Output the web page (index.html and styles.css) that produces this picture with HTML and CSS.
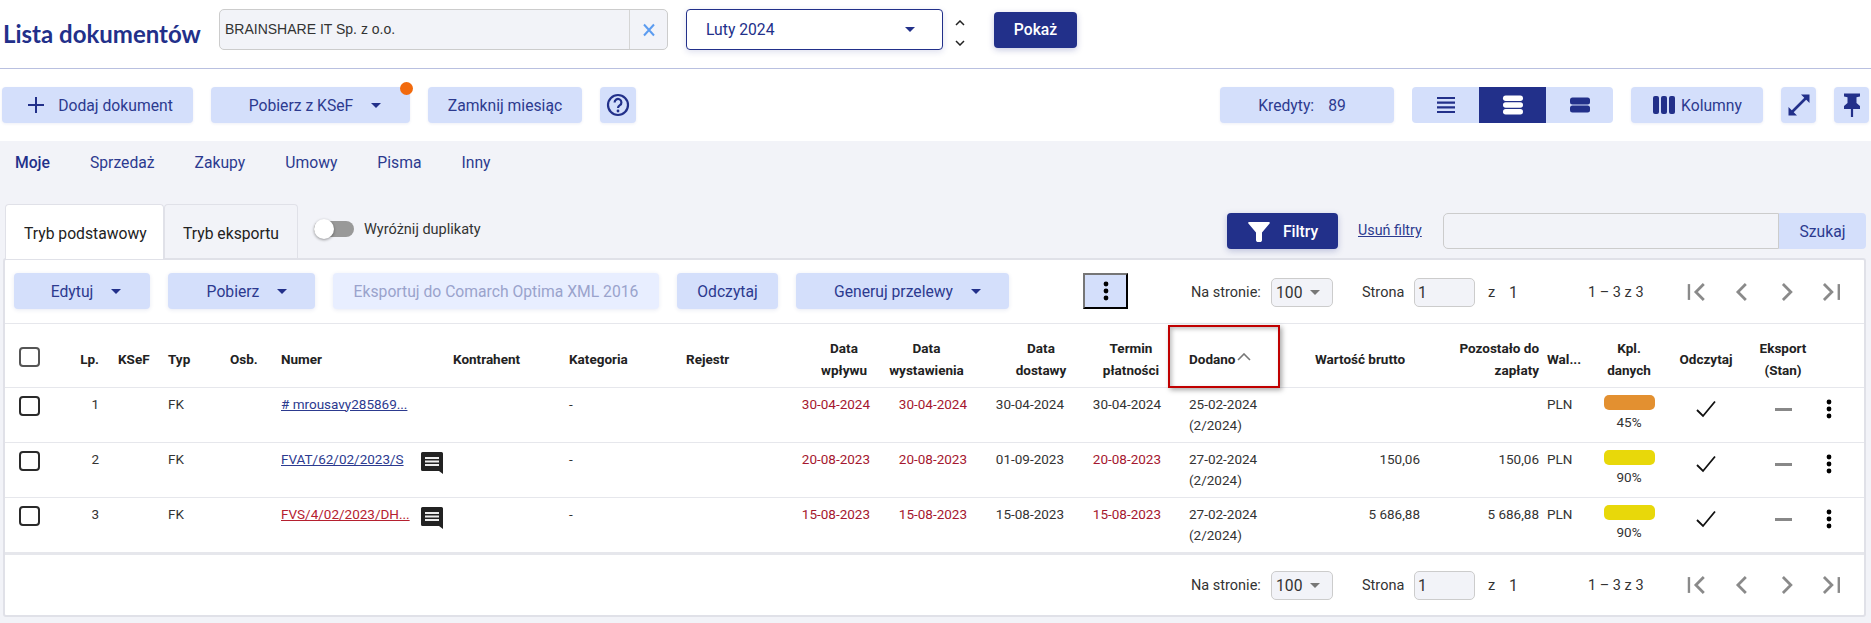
FILE: index.html
```html
<!DOCTYPE html>
<html lang="pl">
<head>
<meta charset="utf-8">
<title>Lista dokumentów</title>
<link rel="stylesheet" href="styles.css">
</head>
<body>
<header class="top">
  <h1 class="title">Lista dokumentów</h1>
  <div class="company">
    <span class="company-name">BRAINSHARE IT Sp. z o.o.</span>
    <span class="company-clear"><svg width="16" height="16" viewBox="0 0 16 16"><path d="M3 2.5l10 11M13 2.5l-10 11" stroke="#5c9cf0" stroke-width="2" fill="none"/></svg></span>
  </div>
  <div class="month"><span>Luty 2024</span><i class="caret"></i></div>
  <div class="stepper">
    <svg width="10" height="6" viewBox="0 0 10 6"><path d="M1 5l4-4 4 4" stroke="#222" stroke-width="1.5" fill="none"/></svg>
    <svg width="10" height="6" viewBox="0 0 10 6"><path d="M1 1l4 4 4-4" stroke="#222" stroke-width="1.5" fill="none"/></svg>
  </div>
  <button class="btn primary show">Pokaż</button>
</header>

<section class="toolbar">
  <button class="btn add"><svg width="18" height="18" viewBox="0 0 18 18"><path d="M9 1v16M1 9h16" stroke="#22308a" stroke-width="2" fill="none"/></svg>Dodaj dokument</button>
  <button class="btn ksef">Pobierz z KSeF<i class="caret"></i><b class="dot"></b></button>
  <button class="btn close-month">Zamknij miesiąc</button>
  <button class="btn help"><svg width="24" height="24" viewBox="0 0 24 24"><circle cx="12" cy="12" r="10" stroke="#22308a" stroke-width="2.2" fill="none"/><path d="M8.6 9.4a3.4 3.4 0 1 1 5.3 2.8c-1.2.8-1.9 1.4-1.9 2.9" stroke="#22308a" stroke-width="2.2" fill="none"/><circle cx="12" cy="18" r="1.4" fill="#22308a"/></svg></button>
  <span class="spacer"></span>
  <button class="btn credits"><span>Kredyty:</span><span>89</span></button>
  <div class="segment">
    <span class="seg"><svg width="20" height="20" viewBox="0 0 20 20"><path d="M1 3h18M1 7.700h18M1 12.300h18M1 17h18" stroke="#22308a" stroke-width="2.200" fill="none"/></svg></span>
    <span class="seg on"><svg width="22" height="20" viewBox="0 0 22 20"><rect x="1" y="0.500" width="20" height="5.500" rx="2.700" fill="#fff"/><rect x="1" y="7.200" width="20" height="5.500" rx="2.700" fill="#fff"/><rect x="1" y="14" width="20" height="5.500" rx="2.700" fill="#fff"/></svg></span>
    <span class="seg"><svg width="22" height="20" viewBox="0 0 22 20"><rect x="1" y="2.500" width="20" height="7" rx="2.500" fill="#22308a"/><rect x="1" y="10.500" width="20" height="7" rx="2.500" fill="#22308a"/></svg></span>
  </div>
  <button class="btn cols"><svg width="24" height="20" viewBox="0 0 24 20"><rect x="1" y="1" width="6" height="18" rx="2" fill="#22308a"/><rect x="9" y="1" width="6" height="18" rx="2" fill="#22308a"/><rect x="17" y="1" width="6" height="18" rx="2" fill="#22308a"/></svg>Kolumny</button>
  <button class="btn icon"><svg width="24" height="24" viewBox="0 0 24 24"><path d="M5 19L19 5" stroke="#22308a" stroke-width="2.600" fill="none"/><path d="M14 1.500h8.500V10zM1.500 14v8.500H10z" fill="#22308a"/></svg></button>
  <button class="btn icon"><svg width="22" height="26" viewBox="0 0 22 26"><path d="M3 1.500h16v3l-3.500.8V11l3.500 3v3H3v-3l3.500-3V5.300L3 4.500z" fill="#22308a"/><path d="M11 16v9" stroke="#22308a" stroke-width="2.200" fill="none"/></svg></button>
</section>

<main class="main">
  <nav class="subnav">
    <a class="active">Moje</a><a>Sprzedaż</a><a>Zakupy</a><a>Umowy</a><a>Pisma</a><a>Inny</a>
  </nav>

  <div class="tabbar">
    <div class="tab current">Tryb podstawowy</div>
    <div class="tab">Tryb eksportu</div>
    <div class="toggle"><span class="track"><span class="thumb"></span></span>Wyróżnij duplikaty</div>
    <span class="spacer"></span>
    <button class="btn primary filters"><svg width="24" height="24" viewBox="0 0 24 24"><path d="M2 3h20c.8 0 1.100.8.600 1.400L15 13.500V21c0 1.500-1 2-2 2h-2c-1 0-2-.5-2-2v-7.500L1.400 4.400C.9 3.800 1.200 3 2 3z" fill="#fff"/></svg>Filtry</button>
    <a class="clear-filters">Usuń filtry</a>
    <div class="search"><span class="search-box"></span><button class="search-btn">Szukaj</button></div>
  </div>

  <section class="card">
    <div class="actions">
      <button class="btn a-edit">Edytuj<i class="caret"></i></button>
      <button class="btn a-get">Pobierz<i class="caret"></i></button>
      <button class="btn a-export">Eksportuj do Comarch Optima XML 2016</button>
      <button class="btn a-read">Odczytaj</button>
      <button class="btn a-pay">Generuj przelewy<i class="caret"></i></button>
      <button class="a-more"><svg width="6" height="20" viewBox="0 0 6 20"><circle cx="3" cy="3" r="2.400"/><circle cx="3" cy="10" r="2.400"/><circle cx="3" cy="17" r="2.400"/></svg></button>
      <div class="pager">
        <span class="p-label">Na stronie:</span>
        <span class="p-select">100<i class="caret gray"></i></span>
        <span class="p-page">Strona</span>
        <span class="p-input">1</span>
        <span class="p-z">z</span><span class="p-total">1</span>
        <span class="p-range">1 – 3 z 3</span>
        <span class="p-icons">
          <svg width="26" height="26" viewBox="0 0 26 26"><path d="M5 5v16" stroke="#8a8a8a" stroke-width="2.400" fill="none"/><path d="M20 5l-8 8 8 8" stroke="#8a8a8a" stroke-width="2.800" fill="none"/></svg>
          <svg width="26" height="26" viewBox="0 0 26 26"><path d="M17 5l-8 8 8 8" stroke="#8a8a8a" stroke-width="2.800" fill="none"/></svg>
          <svg width="26" height="26" viewBox="0 0 26 26"><path d="M9 5l8 8-8 8" stroke="#8a8a8a" stroke-width="2.800" fill="none"/></svg>
          <svg width="26" height="26" viewBox="0 0 26 26"><path d="M6 5l8 8-8 8" stroke="#8a8a8a" stroke-width="2.800" fill="none"/><path d="M21 5v16" stroke="#8a8a8a" stroke-width="2.400" fill="none"/></svg>
        </span>
      </div>
    </div>

    <table class="docs">
      <colgroup>
        <col class="c-check"><col class="c-lp"><col class="c-ksef"><col class="c-typ"><col class="c-osb"><col class="c-num"><col class="c-kon"><col class="c-kat"><col class="c-rej"><col class="c-wpl"><col class="c-wys"><col class="c-dos"><col class="c-ter"><col class="c-dod"><col class="c-war"><col class="c-poz"><col class="c-wal"><col class="c-kpl"><col class="c-odc"><col class="c-eks"><col class="c-men">
      </colgroup>
      <thead>
        <tr>
          <th class="check"><span class="box head"></span></th>
          <th class="lp">Lp.</th><th>KSeF</th><th>Typ</th><th>Osb.</th><th>Numer</th><th>Kontrahent</th><th>Kategoria</th><th>Rejestr</th>
          <th class="h-wpl">Data wpływu</th><th class="h-wys">Data wystawienia</th><th class="h-dos">Data dostawy</th><th class="h-ter">Termin płatności</th>
          <th class="dod">Dodano<svg class="sort" width="14" height="8" viewBox="0 0 14 8"><path d="M1 7l6-6 6 6" stroke="#777" stroke-width="1.600" fill="none"/></svg><span class="mark"></span></th>
          <th class="h-war">Wartość brutto</th><th class="num">Pozostało do zapłaty</th><th class="wal">Wal...</th><th class="ctr">Kpl. danych</th><th class="ctr">Odczytaj</th><th class="ctr">Eksport (Stan)</th><th></th>
        </tr>
      </thead>
      <tbody>
        <tr>
          <td class="check"><span class="box"></span></td><td class="lp">1</td><td></td><td>FK</td><td></td>
          <td><a class="doc">#&nbsp;mrousavy285869...</a></td><td></td><td>-</td><td></td>
          <td class="d-wpl late">30-04-2024</td><td class="d-wys late">30-04-2024</td><td class="d-dos">30-04-2024</td><td class="d-ter">30-04-2024</td>
          <td class="dod">25-02-2024<br>(2/2024)</td><td class="d-war"></td><td class="num"></td><td class="wal">PLN</td>
          <td class="ctr"><span class="bar orange"></span><span class="pct">45%</span></td>
          <td class="ctr"><svg class="check-i" width="20" height="18" viewBox="0 0 20 18"><path d="M1 10l6 6L19 1.500" stroke="#111" stroke-width="1.800" fill="none"/></svg></td>
          <td class="ctr"><span class="dash"></span></td>
          <td class="more"><svg width="6" height="20" viewBox="0 0 6 20"><circle cx="3" cy="3" r="2.400"/><circle cx="3" cy="10" r="2.400"/><circle cx="3" cy="17" r="2.400"/></svg></td>
        </tr>
        <tr>
          <td class="check"><span class="box"></span></td><td class="lp">2</td><td></td><td>FK</td><td></td>
          <td class="with-note"><a class="doc">FVAT/62/02/2023/S</a><svg class="note" width="22" height="22" viewBox="0 0 22 22"><path d="M1.500 0h19A1.500 1.500 0 0 1 22 1.500V22l-4-3H1.500A1.500 1.500 0 0 1 0 17.500v-16A1.500 1.500 0 0 1 1.500 0z" fill="#222"/><path d="M4 6h14M4 9.500h14M4 13h14" stroke="#eee" stroke-width="2.200"/></svg></td><td></td><td>-</td><td></td>
          <td class="d-wpl late">20-08-2023</td><td class="d-wys late">20-08-2023</td><td class="d-dos">01-09-2023</td><td class="d-ter late">20-08-2023</td>
          <td class="dod">27-02-2024<br>(2/2024)</td><td class="d-war">150,06</td><td class="num">150,06</td><td class="wal">PLN</td>
          <td class="ctr"><span class="bar yellow"></span><span class="pct">90%</span></td>
          <td class="ctr"><svg class="check-i" width="20" height="18" viewBox="0 0 20 18"><path d="M1 10l6 6L19 1.500" stroke="#111" stroke-width="1.800" fill="none"/></svg></td>
          <td class="ctr"><span class="dash"></span></td>
          <td class="more"><svg width="6" height="20" viewBox="0 0 6 20"><circle cx="3" cy="3" r="2.400"/><circle cx="3" cy="10" r="2.400"/><circle cx="3" cy="17" r="2.400"/></svg></td>
        </tr>
        <tr>
          <td class="check"><span class="box"></span></td><td class="lp">3</td><td></td><td>FK</td><td></td>
          <td class="with-note"><a class="doc late">FVS/4/02/2023/DH...</a><svg class="note" width="22" height="22" viewBox="0 0 22 22"><path d="M1.500 0h19A1.500 1.500 0 0 1 22 1.500V22l-4-3H1.500A1.500 1.500 0 0 1 0 17.500v-16A1.500 1.500 0 0 1 1.500 0z" fill="#222"/><path d="M4 6h14M4 9.500h14M4 13h14" stroke="#eee" stroke-width="2.200"/></svg></td><td></td><td>-</td><td></td>
          <td class="d-wpl late">15-08-2023</td><td class="d-wys late">15-08-2023</td><td class="d-dos">15-08-2023</td><td class="d-ter late">15-08-2023</td>
          <td class="dod">27-02-2024<br>(2/2024)</td><td class="d-war">5 686,88</td><td class="num">5 686,88</td><td class="wal">PLN</td>
          <td class="ctr"><span class="bar yellow"></span><span class="pct">90%</span></td>
          <td class="ctr"><svg class="check-i" width="20" height="18" viewBox="0 0 20 18"><path d="M1 10l6 6L19 1.500" stroke="#111" stroke-width="1.800" fill="none"/></svg></td>
          <td class="ctr"><span class="dash"></span></td>
          <td class="more"><svg width="6" height="20" viewBox="0 0 6 20"><circle cx="3" cy="3" r="2.400"/><circle cx="3" cy="10" r="2.400"/><circle cx="3" cy="17" r="2.400"/></svg></td>
        </tr>
      </tbody>
    </table>

    <div class="foot">
      <div class="pager">
        <span class="p-label">Na stronie:</span>
        <span class="p-select">100<i class="caret gray"></i></span>
        <span class="p-page">Strona</span>
        <span class="p-input">1</span>
        <span class="p-z">z</span><span class="p-total">1</span>
        <span class="p-range">1 – 3 z 3</span>
        <span class="p-icons">
          <svg width="26" height="26" viewBox="0 0 26 26"><path d="M5 5v16" stroke="#8a8a8a" stroke-width="2.400" fill="none"/><path d="M20 5l-8 8 8 8" stroke="#8a8a8a" stroke-width="2.800" fill="none"/></svg>
          <svg width="26" height="26" viewBox="0 0 26 26"><path d="M17 5l-8 8 8 8" stroke="#8a8a8a" stroke-width="2.800" fill="none"/></svg>
          <svg width="26" height="26" viewBox="0 0 26 26"><path d="M9 5l8 8-8 8" stroke="#8a8a8a" stroke-width="2.800" fill="none"/></svg>
          <svg width="26" height="26" viewBox="0 0 26 26"><path d="M6 5l8 8-8 8" stroke="#8a8a8a" stroke-width="2.800" fill="none"/><path d="M21 5v16" stroke="#8a8a8a" stroke-width="2.400" fill="none"/></svg>
        </span>
      </div>
    </div>
  </section>
</main>
</body>
</html>
```
FILE: styles.css
```css
* { box-sizing: border-box; }
html, body { margin: 0; padding: 0; }
body { width: 1871px; height: 623px; overflow: hidden; background: #f2f3f8; font-family: Roboto, "Liberation Sans", sans-serif; font-size: 15.700px; color: #222; }
button { font-family: inherit; border: 0; padding: 0; margin: 0; }
a { color: inherit; }

.btn { display: flex; align-items: center; justify-content: center; height: 36px; border-radius: 4px; background: #d4dffb; color: #2c3a8f; font-size: 15.700px; box-shadow: 0 1px 3px rgba(34,48,138,.08); position: relative; flex: none; }
.btn.primary { background: #22308a; color: #fff; font-weight: 500; box-shadow: 0 2px 6px rgba(34,48,138,.25); }
.caret { display: inline-block; width: 0; height: 0; border-left: 5px solid transparent; border-right: 5px solid transparent; border-top: 5px solid #22308a; flex: none; }
.caret.gray { border-top-color: #777; }
.spacer { flex: 1; }

.top { display: flex; align-items: center; height: 69px; padding: 0 0 9px 3px; background: #fff; border-bottom: 1px solid #b9c0e0; }
.title { margin: 7px 0 0; width: 216px; font-family: Lato, sans-serif; font-size: 24px; font-weight: 700; color: #22308a; white-space: nowrap; }
.company { display: flex; width: 449px; height: 41px; background: #f2f3f8; border: 1px solid #ccc; border-radius: 5px; font-family: "Liberation Sans", sans-serif; font-size: 14px; color: #333; }
.company-name { flex: 1; padding-left: 5px; line-height: 38px; }
.company-clear { display: flex; align-items: center; justify-content: center; width: 38px; border-left: 1px solid #d5d5d5; }
.month { display: flex; align-items: center; justify-content: space-between; width: 257px; height: 41px; margin-left: 18px; padding: 0 27px 0 19px; border: 1px solid #22308a; border-radius: 4px; background: #fff; color: #22308a; box-shadow: 0 2px 6px rgba(34,48,138,.15); }
.stepper { display: flex; flex-direction: column; gap: 14px; width: 10px; margin: 7px 0 0 12px; }
.stepper svg { display: block; }
.show { width: 83px; margin-left: 29px; }

.toolbar { display: flex; align-items: flex-start; gap: 18px; height: 72px; padding: 18px 2px 0 2px; background: #fff; }
.add { width: 191px; gap: 13px; padding-left: 5px; }
.ksef { width: 199px; gap: 18px; padding-left: 9px; }
.dot { position: absolute; right: -3px; top: -5px; width: 13px; height: 13px; border-radius: 50%; background: #f26a0d; }
.close-month { width: 154px; }
.help { width: 36px; }
.credits { width: 174px; gap: 14px; padding-right: 10px; }
.segment { display: flex; width: 201px; height: 36px; border-radius: 4px; overflow: hidden; background: #d4dffb; }
.seg { flex: 1; display: flex; align-items: center; justify-content: center; }
.seg.on { background: #22308a; }
.cols { width: 132px; gap: 5px; }
.icon { width: 35px; }

.main { padding: 0 5px 0 3px; }
.subnav { display: flex; height: 63px; padding: 11px 0 0 12px; color: #2c3a8f; line-height: 22px; }
.subnav a { margin-right: 40px; }
.subnav .active { font-weight: 500; color: #22308a; }

.tabbar { display: flex; align-items: flex-start; height: 54px; padding-left: 2px; }
.tab { height: 55px; padding: 0 16px; line-height: 57px; border: 1px solid #e0e1e8; border-bottom: 0; border-radius: 4px 4px 0 0; color: #222; white-space: nowrap; position: relative; z-index: 1; }
.tab.current { width: 159px; background: #fff; padding: 0 18px; }
.tab:not(.current) { width: 134px; padding: 0 18px; }
.toggle { display: flex; align-items: center; gap: 10px; height: 24px; margin: 13px 0 0 16px; font-size: 14.500px; color: #333; }
.track { display: block; width: 40px; height: 16px; background: #999; border-radius: 8px; position: relative; }
.thumb { position: absolute; left: 0; top: -2px; width: 20px; height: 20px; border-radius: 50%; background: #fff; box-shadow: 0 1px 3px rgba(0,0,0,.4); }
.filters { width: 111px; gap: 12px; margin-top: 9px; }
.clear-filters { margin: 16px 20px 0 20px; width: 65px; color: #2c3a8f; text-decoration: underline; font-size: 14.300px; line-height: 20px; white-space: nowrap; }
.search { display: flex; width: 423px; height: 36px; margin-top: 9px; }
.search-box { width: 336px; background: #f2f3f8; border: 1px solid #ccc; border-radius: 5px 0 0 5px; }
.search-btn { flex: 1; background: #d4dffb; color: #2c3a8f; border-radius: 0 4px 4px 0; font-size: 15.700px; }

.card { height: 359px; background: #fff; border: 2px solid #e0e1e8; border-radius: 3px; display: flex; flex-direction: column; }
.actions { display: flex; align-items: flex-start; height: 64px; flex: none; padding: 13px 20px 0 9px; border-bottom: 1px solid #e6e7ec; position: relative; }
.actions .btn { box-shadow: 0 1px 4px rgba(34,48,138,.1); }
.a-edit { width: 136px; gap: 18px; margin-right: 18px; padding-left: 8px; }
.a-get { width: 147px; gap: 18px; margin-right: 18px; padding-left: 11px; }
.a-export { width: 326px; margin-right: 18px; background: #e8eeff; color: #9aa3cc; }
.a-read { width: 101px; margin-right: 18px; }
.a-pay { width: 213px; gap: 18px; margin-right: 74px; padding-left: 10px; }
.a-more { width: 45px; height: 36px; background: #d4dffb; border: 2px outset #222; display: flex; align-items: center; justify-content: center; }

.pager { display: flex; align-items: center; height: 30px; font-size: 14.500px; color: #333; }
.actions .pager { margin: 4px 0 0 auto; }
.p-label { white-space: nowrap; width: 70px; margin-right: 10px; }
.p-select { display: flex; align-items: center; justify-content: space-between; width: 62px; height: 29px; padding: 0 12px 0 4px; border: 1px solid #ccc; border-radius: 5px; background: #f2f3f8; font-size: 15.700px; }
.p-page { margin-left: 29px; width: 52px; }
.p-input { width: 61px; height: 29px; padding-left: 3px; line-height: 27px; border: 1px solid #ccc; border-radius: 5px; background: #f2f3f8; font-size: 15.700px; }
.p-z { margin-left: 13px; width: 21px; }
.p-total { width: 79px; font-size: 15.700px; }
.p-range { width: 96px; white-space: nowrap; }
.p-icons { display: flex; gap: 19px; width: 160px; }
.p-icons svg { display: block; }

.docs { width: 1859px; border-collapse: collapse; table-layout: fixed; font-size: 13.500px; color: #333; flex: none; }
.docs th { height: 63px; padding: 7px 0 0; text-align: left; font-size: 13.500px; font-weight: 700; color: #222; line-height: 22px; }
.docs td { height: 55px; padding: 6px 0 0; vertical-align: top; line-height: 21px; white-space: nowrap; }
.docs tbody tr { border-top: 1px solid #e6e7ec; }
.c-check { width: 65px; } .c-lp { width: 48px; } .c-ksef { width: 50px; } .c-typ { width: 62px; } .c-osb { width: 51px; }
.c-num { width: 172px; } .c-kon { width: 116px; } .c-kat { width: 117px; } .c-rej { width: 104px; }
.c-wpl { width: 90px; } .c-wys { width: 105px; } .c-dos { width: 93px; } .c-ter { width: 92px; } .c-dod { width: 130px; }
.c-war { width: 120px; } .c-poz { width: 119px; } .c-wal { width: 56px; } .c-kpl { width: 68px; } .c-odc { width: 86px; } .c-eks { width: 68px; } .c-men { width: 47px; }

.docs th.check { padding: 4px 0 0 14px; }
.docs td.check { padding: 8px 0 0 14px; }
.box { display: block; width: 21px; height: 20px; border: 2px solid #2a2a2a; border-radius: 4px; background: #fff; }
.box.head { border-color: #555; }
.docs .lp { text-align: right; padding-right: 19px; }
.docs .late { color: #a5172f; }
.doc { color: #2c3a8f; text-decoration: underline; }
.docs .doc.late { color: #b5202f; }
.with-note { position: relative; }
.note { position: absolute; left: 140px; top: 9px; }

.docs .h-wpl, .docs .h-wys, .docs .h-dos, .docs .h-ter { text-align: center; white-space: normal; }
.docs .h-wpl { padding-left: 18px; }
.docs .h-wys { padding-right: 12px; }
.docs .h-dos { padding-left: 19px; }
.docs .h-ter { padding-left: 14px; }
.docs .d-wpl, .docs .d-wys, .docs .d-dos, .docs .d-ter { text-align: right; }
.docs .d-wpl { padding-right: 10px; }
.docs .d-wys { padding-right: 18px; }
.docs .d-dos { padding-right: 14px; }
.docs .d-ter { padding-right: 9px; }
.docs .dod { padding-left: 19px; position: relative; }
.sort { margin-left: 2px; vertical-align: 3px; }
.mark { position: absolute; left: -2px; top: 1px; width: 112px; height: 63px; border: 2px solid #c00000; box-shadow: 2px 2px 5px rgba(0,0,0,.35), inset 2px 2px 4px rgba(0,0,0,.25); }
.docs .h-war { text-align: right; padding-right: 15px; }
.docs .d-war { text-align: right; }
.docs .num { text-align: right; }
.docs .wal { padding-left: 8px; }
.docs .ctr { text-align: center; }
.bar { display: block; width: 51px; height: 15px; margin: 1px auto 0; border-radius: 5px; }
.orange { background: #e39030; }
.yellow { background: #e8d80a; }
.pct { display: block; margin-top: 2px; }
.check-i { display: block; margin: 6px auto 0; }
.dash { display: block; width: 17px; height: 3px; margin: 14px auto 0; background: #888; }
.docs .more { padding: 11px 0 0 9px; color: #111; }
.more svg, .a-more svg { display: block; }

.foot { flex: 1; display: flex; justify-content: flex-end; align-items: center; padding-right: 20px; border-top: 3px solid #e6e7ec; }
```
